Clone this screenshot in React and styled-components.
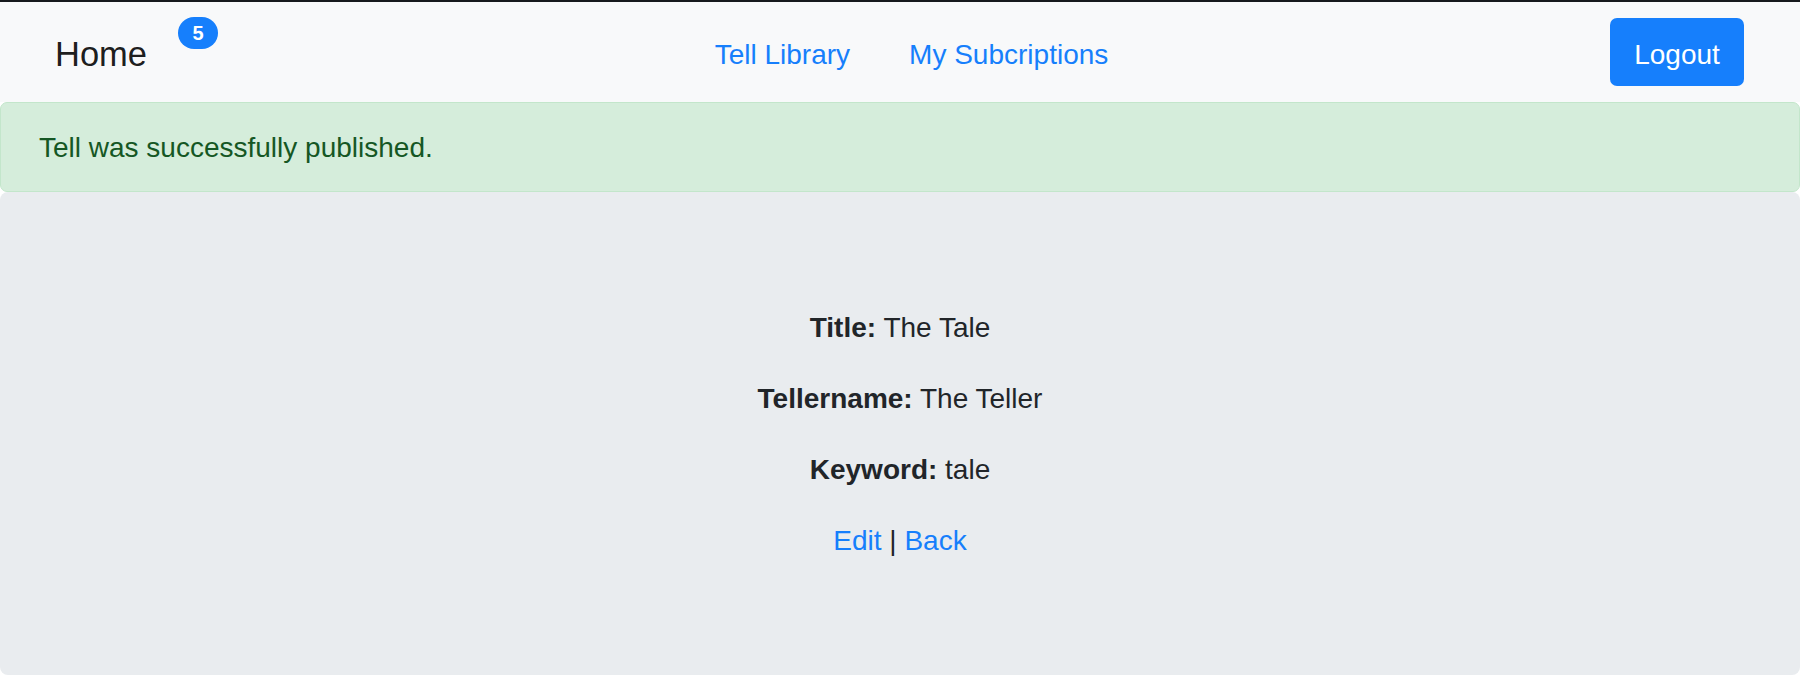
import React from "react";
import styled, { createGlobalStyle } from "styled-components";

const GlobalStyle = createGlobalStyle`
  html, body { margin: 0; padding: 0; background: #ffffff; }
  body {
    font-family: "Liberation Sans", Arial, sans-serif;
    font-size: 28px;
    color: #212529;
  }
  * { box-sizing: border-box; }
`;

const Page = styled.div`
  border-top: 2px solid #16191d;
  width: 1800px;
`;

const Navbar = styled.nav`
  display: grid;
  grid-template-columns: 1fr auto 1fr;
  align-items: center;
  height: 100px;
  padding: 0 56px 0 55px;
  background: #f8f9fa;
`;

const Brand = styled.div`
  display: flex;
  align-items: center;
`;

const BrandLink = styled.a`
  font-size: 34.5px;
  line-height: 1;
  padding-top: 5px;
  color: rgba(0, 0, 0, 0.9);
  text-decoration: none;
`;

const Badge = styled.span`
  position: relative;
  top: -19px;
  margin-left: 31px;
  display: inline-flex;
  align-items: center;
  justify-content: center;
  width: 40px;
  height: 32px;
  border-radius: 16px;
  background: #167ffc;
  color: #ffffff;
  font-weight: 700;
  font-size: 20px;
  line-height: 1;
`;

const Links = styled.div`
  display: flex;
  gap: 59px;
  padding-left: 24px;
  padding-top: 5px;
`;

const NavLink = styled.a`
  color: #167ffc;
  text-decoration: none;
  font-size: 28px;
  line-height: 1.5;
`;

const Right = styled.div`
  display: flex;
  justify-content: flex-end;
`;

const Button = styled.button`
  width: 134px;
  height: 68px;
  border: none;
  border-radius: 7px;
  background: #167ffc;
  color: #ffffff;
  font-family: inherit;
  font-size: 28px;
  padding: 5px 0 0;
  cursor: pointer;
`;

const Alert = styled.div`
  height: 90px;
  display: flex;
  align-items: center;
  padding: 1px 38px 0;
  background: #d5eddb;
  border: 1px solid #c3e6cb;
  border-radius: 7px;
  color: #155724;
  font-size: 28px;
`;

const Jumbotron = styled.main`
  height: 483px;
  background: #e9ecef;
  border-radius: 8px;
  display: flex;
  flex-direction: column;
  align-items: center;
  justify-content: center;
  gap: 30px;
  padding-top: 1px;
`;

const Line = styled.p`
  margin: 0;
  line-height: 41px;
  font-size: 28px;
  text-align: center;
`;

const Label = styled.strong`
  font-weight: 700;
`;

const TextLink = styled.a`
  color: #167ffc;
  text-decoration: none;
`;

export default function App() {
  return (
    <>
      <GlobalStyle />
      <Page>
        <Navbar>
          <Brand>
            <BrandLink href="#">Home</BrandLink>
            <Badge>5</Badge>
          </Brand>
          <Links>
            <NavLink href="#">Tell Library</NavLink>
            <NavLink href="#">My Subcriptions</NavLink>
          </Links>
          <Right>
            <Button>Logout</Button>
          </Right>
        </Navbar>
        <Alert>Tell was successfully published.</Alert>
        <Jumbotron>
          <Line>
            <Label>Title:</Label> The Tale
          </Line>
          <Line>
            <Label>Tellername:</Label> The Teller
          </Line>
          <Line>
            <Label>Keyword:</Label> tale
          </Line>
          <Line>
            <TextLink href="#">Edit</TextLink> | <TextLink href="#">Back</TextLink>
          </Line>
        </Jumbotron>
      </Page>
    </>
  );
}
